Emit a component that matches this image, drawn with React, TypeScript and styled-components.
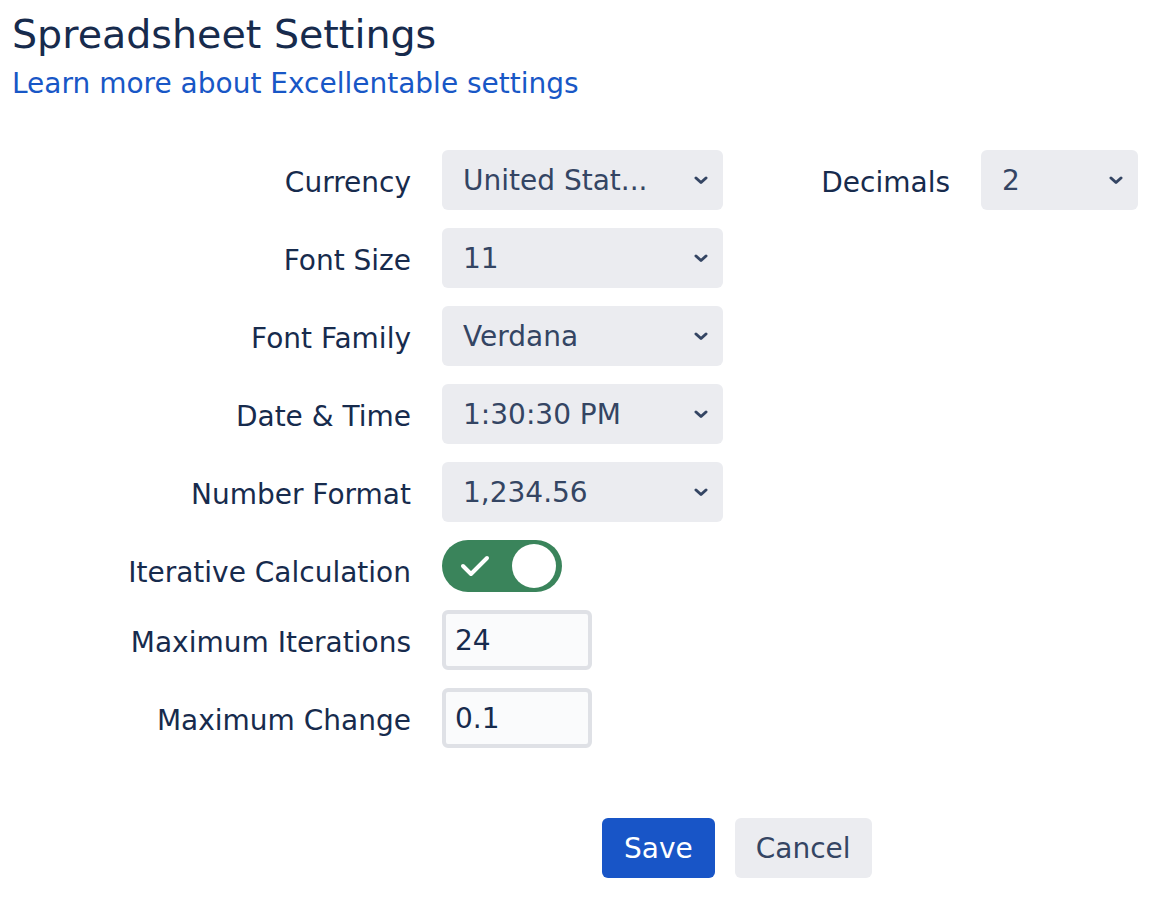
import React from "react";
import styled, { createGlobalStyle } from "styled-components";

const GlobalStyle = createGlobalStyle`
  html, body {
    margin: 0;
    padding: 0;
    background: #ffffff;
  }
  body {
    font-family: "DejaVu Sans", Verdana, sans-serif;
    color: #172b4d;
  }
`;

const Page = styled.div`
  padding: 11px 12px 0 12px;
`;

const Title = styled.h1`
  margin: 0;
  font-size: 39.6px;
  font-weight: 400;
  line-height: 46px;
  color: #172b4d;
`;

const LearnLink = styled.a`
  display: block;
  margin-top: 10px;
  font-size: 28px;
  line-height: 33px;
  color: #1857c6;
  text-decoration: none;
`;

const Form = styled.div`
  display: grid;
  grid-template-columns: 399px 281px 196px 157px;
  column-gap: 31px;
  row-gap: 18px;
  margin-top: 50px;
  align-items: center;
`;

const Label = styled.label<{ $col?: number }>`
  grid-column: ${(p) => p.$col ?? 1};
  justify-self: end;
  align-self: start;
  font-size: 28px;
  line-height: 33px;
  padding-top: 16px;
  color: #172b4d;
  white-space: nowrap;
`;

const SelectBox = styled.div<{ $col?: number }>`
  grid-column: ${(p) => p.$col ?? 2};
  height: 60px;
  box-sizing: border-box;
  border-radius: 6px;
  background: #ebecf0;
  display: flex;
  align-items: center;
  justify-content: space-between;
  padding: 0 15px 0 21px;
  font-size: 28px;
  color: #344563;
`;

const SelectValue = styled.span`
  white-space: nowrap;
  overflow: hidden;
`;

const Chevron = () => (
  <svg width="14" height="9" viewBox="0 0 14 9" fill="none">
    <path
      d="M2 2 L7 6.5 L12 2"
      stroke="#344563"
      strokeWidth="3"
      strokeLinecap="round"
      strokeLinejoin="round"
    />
  </svg>
);

const ToggleTrack = styled.div<{ $on: boolean }>`
  grid-column: 2;
  justify-self: start;
  width: 120px;
  height: 52px;
  box-sizing: border-box;
  border-radius: 26px;
  background: ${(p) => (p.$on ? "#3a845b" : "#a5adba")};
  display: flex;
  align-items: center;
  justify-content: space-between;
  padding: 0 6px 0 18px;
`;

const ToggleKnob = styled.div`
  width: 44px;
  height: 44px;
  border-radius: 50%;
  background: #ffffff;
`;

const CheckIcon = () => (
  <svg width="30" height="22" viewBox="0 0 30 22" fill="none">
    <path
      d="M3 11 L11 19 L27 3"
      stroke="#ffffff"
      strokeWidth="4"
      strokeLinecap="round"
      strokeLinejoin="round"
    />
  </svg>
);

const NumberInput = styled.div`
  grid-column: 2;
  justify-self: start;
  width: 150px;
  height: 60px;
  box-sizing: border-box;
  border: 4px solid #dfe1e6;
  border-radius: 6px;
  background: #fafbfc;
  display: flex;
  align-items: center;
  padding-left: 9px;
  font-size: 28px;
  color: #172b4d;
`;

const Footer = styled.div`
  display: flex;
  gap: 20px;
  margin-top: 70px;
  padding-left: 590px;
`;

const Button = styled.button<{ $primary?: boolean }>`
  height: 60px;
  padding: 0 ${(p) => (p.$primary ? 22 : 21)}px;
  border: none;
  border-radius: 6px;
  font-family: "DejaVu Sans", Verdana, sans-serif;
  font-size: 28px;
  background: ${(p) => (p.$primary ? "#1855c7" : "#ebecf0")};
  color: ${(p) => (p.$primary ? "#ffffff" : "#344563")};
  cursor: pointer;
`;

const Select = ({ value, col }: { value: string; col?: number }) => (
  <SelectBox $col={col}>
    <SelectValue>{value}</SelectValue>
    <Chevron />
  </SelectBox>
);

export default function App() {
  return (
    <Page>
      <GlobalStyle />
      <Title>Spreadsheet Settings</Title>
      <LearnLink href="#">Learn more about Excellentable settings</LearnLink>
      <Form>
        <Label>Currency</Label>
        <Select value="United Stat..." />
        <Label $col={3}>Decimals</Label>
        <Select value="2" col={4} />

        <Label>Font Size</Label>
        <Select value="11" />

        <Label>Font Family</Label>
        <Select value="Verdana" />

        <Label>Date &amp; Time</Label>
        <Select value="1:30:30 PM" />

        <Label>Number Format</Label>
        <Select value="1,234.56" />

        <Label>Iterative Calculation</Label>
        <ToggleTrack $on>
          <CheckIcon />
          <ToggleKnob />
        </ToggleTrack>

        <Label>Maximum Iterations</Label>
        <NumberInput>24</NumberInput>

        <Label>Maximum Change</Label>
        <NumberInput>0.1</NumberInput>
      </Form>
      <Footer>
        <Button $primary>Save</Button>
        <Button>Cancel</Button>
      </Footer>
    </Page>
  );
}
